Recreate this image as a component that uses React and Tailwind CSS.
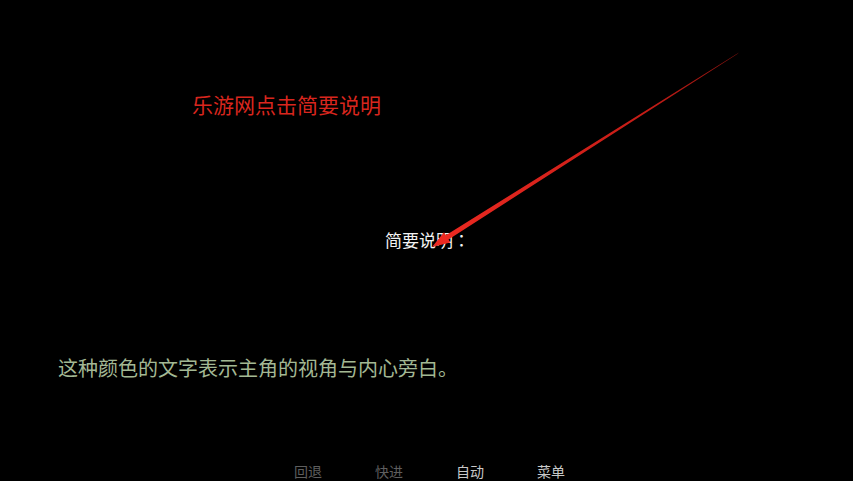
export default function App() {
  const font = { fontFamily: '"Noto Sans CJK SC", "Noto Sans", sans-serif' };
  return (
    <div className="relative w-[853px] h-[481px] bg-black overflow-hidden" style={font}>
      <div className="flex flex-col h-full">
        <div className="pt-[94px] pl-[192px] text-[21px] leading-[21px] text-[#d8261e]">乐游网点击简要说明</div>
        <div className="mt-[116px] pl-[385px] text-[17px] leading-[17px] text-[#f2f2f2]">
          简要说明<span className="[font-family:'Noto_Sans_CJK_TC',sans-serif]">：</span>
        </div>
        <div className="mt-[110px] pl-[58px] text-[20px] leading-[20px] text-[#a3b894]">这种颜色的文字表示主角的视角与内心旁白。</div>
        <div className="mt-auto mb-[3px] flex pl-[294px] gap-[53px] text-[14px] leading-[14px]">
          <span className="text-[#5e5e5e]">回退</span>
          <span className="text-[#5e5e5e]">快进</span>
          <span className="text-[#c8c8c8]">自动</span>
          <span className="text-[#c8c8c8]">菜单</span>
        </div>
      </div>
      <svg className="absolute inset-0" width="853" height="481" viewBox="0 0 853 481">
        <defs>
          <linearGradient id="g" x1="738" y1="53" x2="432" y2="247" gradientUnits="userSpaceOnUse">
            <stop offset="0" stopColor="#8a120e" />
            <stop offset="0.3" stopColor="#c41c16" />
            <stop offset="1" stopColor="#ee2a22" />
          </linearGradient>
        </defs>
        <polygon points="739,52.5 737,54.2 448.5,239.5 450.4,242.4 432,247 444,232.3 445.9,235.2" fill="url(#g)" />
      </svg>
    </div>
  );
}
